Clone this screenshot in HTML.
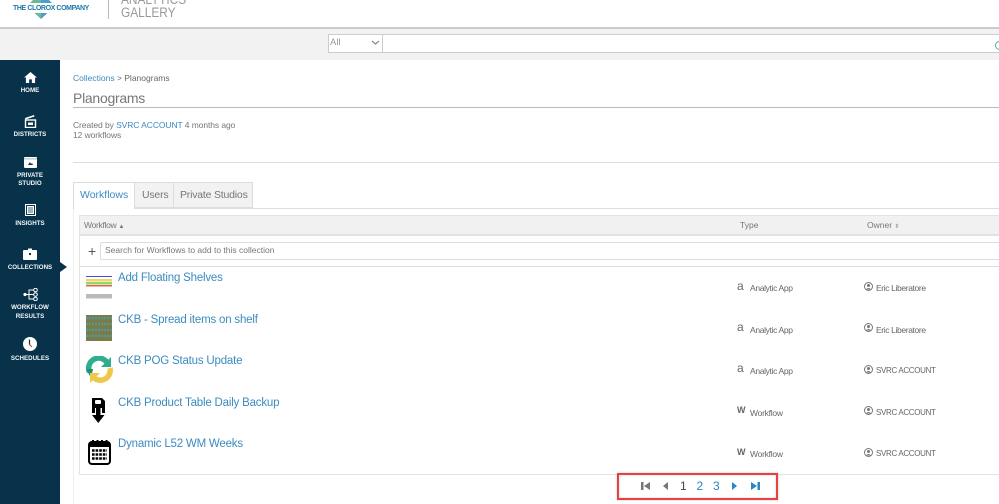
<!DOCTYPE html>
<html><head><meta charset="utf-8"><style>
html,body{margin:0;padding:0;background:#fff}
#p{position:relative;width:999px;height:504px;overflow:hidden;background:#fff;font-family:"Liberation Sans",sans-serif;color:#666;filter:blur(.3px)}
#p div,#p svg{position:absolute}
.t{white-space:nowrap}
.n{left:0;width:60px;text-align:center;color:#f2f6f8;font-size:6.2px;line-height:8px;font-weight:bold}
.l{color:#3b8bbf;font-size:11.5px;letter-spacing:-.2px;left:118px;white-space:nowrap;line-height:14px}
.s{font-size:8.5px;color:#666;white-space:nowrap;line-height:10px}
.ap{letter-spacing:-.35px}.el{letter-spacing:-.37px}.sv{font-size:8px;letter-spacing:-.33px}.wf{letter-spacing:-.25px}
</style></head><body><div id="p">
<!-- top -->
<svg style="left:13px;top:0" width="78" height="20" viewBox="0 0 78 20"><path d="M28 -8L42 6 28 6z" fill="#4f9bd0"/><path d="M28 -8L14 6h14z" fill="#6fb98f"/><path d="M14 6L28 19V6z" fill="#6fb98f"/><path d="M42 6L28 19V6z" fill="#4f9bd0"/><rect x="0" y="3" width="76" height="10" fill="#fff"/></svg>
<div class="t" style="left:13px;top:4px;font-size:7px;line-height:9px;color:#1f7aa8;font-weight:bold;letter-spacing:-.4px">THE CLOROX COMPANY</div>
<div style="left:108px;top:0;width:1px;height:19px;background:#bbb"></div>
<div class="t" style="left:121px;top:-6px;font-size:13.5px;line-height:12.5px;color:#999;transform:scaleX(.88);transform-origin:left top">ANALYTICS<br>GALLERY</div>
<div style="left:0;top:27px;width:999px;height:2px;background:#ccc"></div>
<div style="left:0;top:29px;width:999px;height:31px;background:#f2f2f2"></div>
<div style="left:328px;top:34px;width:671px;height:19px;background:#fff;border:1px solid #ccc;border-right:0;box-sizing:border-box"></div>
<div style="left:382px;top:34px;width:1px;height:19px;background:#ccc"></div>
<div class="t" style="left:330px;top:38px;font-size:9.5px;line-height:10px;color:#999">All</div>
<svg style="left:371px;top:40px" width="9" height="6"><path d="M1 1l3.5 3L8 1" fill="none" stroke="#777" stroke-width="1.1"/></svg>
<div style="left:995px;top:41px;width:7px;height:7px;border:1.3px solid #3fb5ad;border-radius:50%"></div>
<!-- sidebar -->
<div style="left:0;top:60px;width:60px;height:444px;background:#08324a"></div>
<div style="left:60px;top:262px;width:0;height:0;border-left:7px solid #08324a;border-top:5px solid transparent;border-bottom:5px solid transparent"></div>
<svg style="left:24px;top:72px" width="13" height="11" viewBox="0 0 14 12"><path d="M7 0L0 6h2v6h3.500V8h3v4H12V6h2z" fill="#fff"/></svg>
<div class="n" style="top:87px">HOME</div>
<svg style="left:24px;top:115px" width="13" height="13" viewBox="0 0 13 13"><path d="M1 3l9-3 .5 1.500-9 3z" fill="#fff"/><rect x="1.500" y="5" width="10" height="7.500" fill="none" stroke="#fff" stroke-width="1.400"/><rect x="4" y="7.500" width="5" height="2.500" fill="#fff"/></svg>
<div class="n" style="top:131px">DISTRICTS</div>
<svg style="left:24px;top:157px" width="13" height="11" viewBox="0 0 13 11"><rect width="13" height="11" rx="1" fill="#fff"/><rect x="0" y="1.500" width="13" height=".8" fill="#8aa"/><path d="M4 8l2-3 1 2 1-1 1 2z" fill="#08324a"/></svg>
<div class="n" style="top:172px">PRIVATE<br>STUDIO</div>
<svg style="left:25px;top:204px" width="11" height="12" viewBox="0 0 11 12"><rect width="11" height="12" fill="#fff"/><rect x="1.500" y="1.500" width="8" height="9" fill="none" stroke="#08324a"/><path d="M3 4h5M3 6h5M3 8h5" stroke="#08324a" stroke-width=".8"/></svg>
<div class="n" style="top:220px">INSIGHTS</div>
<svg style="left:23px;top:248px" width="14" height="12" viewBox="0 0 14 12"><path d="M5 2V.5h4V2h4a1 1 0 011 1v8a1 1 0 01-1 1H1a1 1 0 01-1-1V3a1 1 0 011-1z" fill="#fff"/><rect x="6" y="5" width="2" height="2" fill="#08324a"/></svg>
<div class="n" style="top:264px">COLLECTIONS</div>
<svg style="left:23px;top:288px" width="15" height="13" viewBox="0 0 15 13"><circle cx="2" cy="6.500" r="1.600" fill="#fff"/><circle cx="12.500" cy="2" r="1.800" fill="none" stroke="#fff"/><circle cx="12.500" cy="6.500" r="1.800" fill="none" stroke="#fff"/><circle cx="12.500" cy="11" r="1.800" fill="none" stroke="#fff"/><path d="M2 6.500h8.500M6 6.500V2h4.500M6 6.500V11h4.500" fill="none" stroke="#fff"/></svg>
<div class="n" style="top:303px;line-height:9px">WORKFLOW<br>RESULTS</div>
<svg style="left:23px;top:337px" width="14" height="14" viewBox="0 0 14 14"><circle cx="7" cy="7" r="7" fill="#fff"/><path d="M6.500 2.500V7.500" fill="none" stroke="#08324a" stroke-width="1.200"/><path d="M6.500 7.500L9 10" fill="none" stroke="#c0504a" stroke-width="1.200"/></svg>
<div class="n" style="top:355px">SCHEDULES</div>
<!-- header -->
<div class="t" style="left:73px;top:73px;font-size:8.5px;line-height:11px"><span style="color:#3b8bbf">Collections</span> &gt; Planograms</div>
<div class="t" style="left:73px;top:90px;font-size:14px;line-height:17px;color:#777;letter-spacing:-.27px">Planograms</div>
<div style="left:73px;top:107px;width:926px;height:1px;background:#bbb"></div>
<div class="t" style="left:73px;top:120px;font-size:8.5px;line-height:10px;color:#777;letter-spacing:-.08px">Created by <span style="color:#3b8bbf">SVRC ACCOUNT</span> 4 months ago<br>12 workflows</div>
<div style="left:73px;top:162px;width:926px;height:1px;background:#ddd"></div>
<!-- tabs -->
<div style="left:73px;top:208px;width:926px;height:1px;background:#ddd"></div>
<div style="left:73px;top:182px;width:62px;height:27px;background:#fff;border:1px solid #ddd;border-bottom:0;box-sizing:border-box"></div>
<div style="left:135px;top:182px;width:39px;height:26px;background:#f2f2f2;border:1px solid #ddd;border-left:0;box-sizing:border-box"></div>
<div style="left:174px;top:182px;width:79px;height:26px;background:#f2f2f2;border:1px solid #ddd;border-left:0;box-sizing:border-box"></div>
<div class="t" style="left:80px;top:189px;font-size:10.5px;line-height:13px;color:#3b8bbf">Workflows</div>
<div class="t" style="left:142px;top:189px;font-size:10.5px;line-height:13px;color:#777;letter-spacing:-.2px">Users</div>
<div class="t" style="left:180px;top:189px;font-size:10.5px;line-height:13px;color:#777;letter-spacing:-.2px">Private Studios</div>
<div style="left:73px;top:209px;width:1px;height:295px;background:#eee"></div>
<!-- table -->
<div style="left:79px;top:215px;width:920px;height:260px;border:1px solid #e3e3e3;border-right:0;box-sizing:border-box"></div>
<div style="left:80px;top:216px;width:919px;height:18px;background:#f1f1f1;border-bottom:2px solid #e2e2e2"></div>
<div class="s" style="left:84px;top:220px;color:#777;letter-spacing:-.3px">Workflow <span style="font-size:6px">▲</span></div>
<div class="s" style="left:740px;top:220px;color:#777">Type</div>
<div class="s" style="left:867px;top:220px;color:#777">Owner <span style="font-size:6px;color:#aaa">⬍</span></div>
<div style="left:80px;top:266px;width:919px;height:1px;background:#ddd"></div>
<div class="t" style="left:88px;top:243px;font-size:14px;line-height:16px;color:#555">+</div>
<div style="left:100px;top:242px;width:899px;height:18px;background:#fff;border:1px solid #ddd;border-right:0;box-sizing:border-box;border-radius:2px 0 0 2px"></div>
<div class="t" style="left:105px;top:245px;font-size:8.5px;line-height:11px;color:#777">Search for Workflows to add to this collection</div>
<!-- row icons -->
<svg style="left:86px;top:276px" width="26" height="23" viewBox="0 0 26 23"><rect y="0" width="26" height="1" fill="#4a4adf"/><rect y="3" width="26" height="2.500" fill="#f0d860"/><rect y="6" width="26" height="2.500" fill="#8fd86f"/><rect y="9" width="26" height="1.500" fill="#e8604f"/><rect y="18" width="26" height="4.500" fill="#bbb"/></svg>
<svg style="left:86px;top:315px" width="26" height="26" viewBox="0 0 26 26"><rect width="26" height="26" fill="#7d7a45"/><path d="M0 3h26M0 9h26M0 15h26M0 21h26" stroke="#4d9a9a" stroke-width="2.500" stroke-dasharray="2 1"/></svg>
<svg style="left:86px;top:356px" width="27" height="27" viewBox="0 0 27 27"><path d="M3.500 16A10 10 0 0 1 21 6.500" fill="none" stroke="#2eae8f" stroke-width="5.500"/><path d="M25 1v10H15z" fill="#2eae8f"/><path d="M0 13l7 0 -2 9z" fill="#1f8f73"/><path d="M24 12A10 10 0 0 1 8 22" fill="none" stroke="#efc84a" stroke-width="5.500"/><path d="M4 27V17h10z" fill="#efc84a"/></svg>
<svg style="left:91px;top:397px" width="15" height="27" viewBox="0 0 15 27"><path d="M1 1h10l3 3v12h-3v-5H4v5H1z" fill="#000"/><rect x="4" y="3" width="6" height="4" rx="1" fill="#fff"/><rect x="5" y="11" width="4.500" height="8" fill="#000"/><path d="M1 18h12.500l-6.250 8z" fill="#000"/></svg>
<svg style="left:88px;top:439px" width="23" height="26" viewBox="0 0 23 26"><rect x="1" y="3" width="21" height="22" rx="3" fill="#fff" stroke="#000" stroke-width="2"/><rect x="1" y="4" width="21" height="4" fill="#000"/><path d="M5 1v5M9.500 1v5M14 1v5M18.500 1v5" stroke="#000" stroke-width="2"/><path d="M4 11.500h15M4 15.500h15M4 19.500h15" stroke="#000" stroke-width="2.600" stroke-dasharray="2.600 1"/></svg>
<!-- rows -->
<div class="l" style="top:271px">Add Floating Shelves</div>
<div class="l" style="top:313px">CKB - Spread items on shelf</div>
<div class="l" style="top:354px">CKB POG Status Update</div>
<div class="l" style="top:396px">CKB Product Table Daily Backup</div>
<div class="l" style="top:437px">Dynamic L52 WM Weeks</div>
<div class="t" style="left:737px;top:280px;font-size:12px;line-height:12px;color:#666">a</div>
<div class="t" style="left:737px;top:362px;font-size:12px;line-height:12px;color:#666">a</div>
<div class="t" style="left:737px;top:321px;font-size:12px;line-height:12px;color:#666">a</div>
<div class="t" style="left:737px;top:405px;font-size:9px;line-height:10px;color:#666;font-weight:bold">W</div>
<div class="t" style="left:737px;top:447px;font-size:9px;line-height:10px;color:#666;font-weight:bold">W</div>
<div class="s ap" style="left:750px;top:283px">Analytic App</div>
<div class="s ap" style="left:750px;top:325px">Analytic App</div>
<div class="s ap" style="left:750px;top:366px">Analytic App</div>
<div class="s wf" style="left:750px;top:408px">Workflow</div>
<div class="s wf" style="left:750px;top:449px">Workflow</div>
<svg style="left:864px;top:282px" width="9" height="9"><circle cx="4.500" cy="4.500" r="4" fill="none" stroke="#777"/><circle cx="4.500" cy="3.500" r="1.500" fill="#777"/><path d="M2 7.500c1-2 4-2 5 0" fill="#777"/></svg>
<svg style="left:864px;top:323px" width="9" height="9"><circle cx="4.500" cy="4.500" r="4" fill="none" stroke="#777"/><circle cx="4.500" cy="3.500" r="1.500" fill="#777"/><path d="M2 7.500c1-2 4-2 5 0" fill="#777"/></svg>
<svg style="left:864px;top:365px" width="9" height="9"><circle cx="4.500" cy="4.500" r="4" fill="none" stroke="#777"/><circle cx="4.500" cy="3.500" r="1.500" fill="#777"/><path d="M2 7.500c1-2 4-2 5 0" fill="#777"/></svg>
<svg style="left:864px;top:406px" width="9" height="9"><circle cx="4.500" cy="4.500" r="4" fill="none" stroke="#777"/><circle cx="4.500" cy="3.500" r="1.500" fill="#777"/><path d="M2 7.500c1-2 4-2 5 0" fill="#777"/></svg>
<svg style="left:864px;top:448px" width="9" height="9"><circle cx="4.500" cy="4.500" r="4" fill="none" stroke="#777"/><circle cx="4.500" cy="3.500" r="1.500" fill="#777"/><path d="M2 7.500c1-2 4-2 5 0" fill="#777"/></svg>
<div class="s el" style="left:876px;top:283px">Eric Liberatore</div>
<div class="s el" style="left:876px;top:325px">Eric Liberatore</div>
<div class="s sv" style="left:876px;top:366px">SVRC ACCOUNT</div>
<div class="s sv" style="left:876px;top:408px">SVRC ACCOUNT</div>
<div class="s sv" style="left:876px;top:449px">SVRC ACCOUNT</div>
<!-- pager -->
<div style="left:617px;top:473px;width:161px;height:27px;border:2px solid #e8413f;box-sizing:border-box;box-shadow:0 0 2px rgba(0,0,0,.25),inset 0 0 2px rgba(0,0,0,.2)"></div>
<svg style="left:641px;top:482px" width="9" height="8"><rect width="2.500" height="8" fill="#777"/><path d="M9 0v8L3 4z" fill="#777"/></svg>
<svg style="left:663px;top:482px" width="6" height="8"><path d="M5 0v8L0 4z" fill="#777"/></svg>
<div class="t" style="left:680px;top:479px;font-size:12px;line-height:14px;color:#444">1</div>
<div class="t" style="left:696.500px;top:479px;font-size:12px;line-height:14px;color:#2a86c8">2</div>
<div class="t" style="left:713px;top:479px;font-size:12px;line-height:14px;color:#2a86c8">3</div>
<svg style="left:732px;top:482px" width="6" height="8"><path d="M0 0v8l5-4z" fill="#2a86c8"/></svg>
<svg style="left:751px;top:482px" width="9" height="8"><path d="M0 0v8l6-4z" fill="#2a86c8"/><rect x="6.500" width="2.500" height="8" fill="#2a86c8"/></svg>
</div></body></html>
